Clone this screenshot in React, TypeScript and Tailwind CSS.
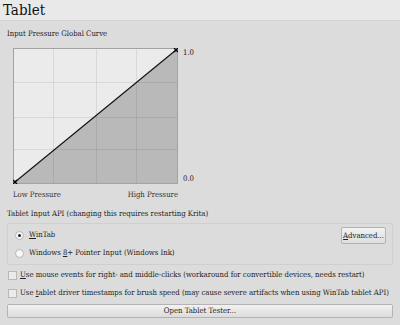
import React from "react";

const font = { fontFamily: '"DejaVu Serif Condensed", "DejaVu Serif", serif' };

function Curve() {
  return (
    <svg width="165" height="136" viewBox="0 0 165 136" className="block">
      <rect x="0.5" y="0.5" width="164" height="135" fill="#ebebeb" stroke="#a3a3a3" />
      <polygon points="1,135 164,1 164,135" fill="#b9b9b9" />
      {[40, 83, 123].map((x) => (
        <line key={"v" + x} x1={x + 0.5} y1="1" x2={x + 0.5} y2="135" stroke="#000" strokeOpacity="0.08" />
      ))}
      {[34, 69, 101].map((y) => (
        <line key={"h" + y} x1="1" y1={y + 0.5} x2="164" y2={y + 0.5} stroke="#000" strokeOpacity="0.08" />
      ))}
      <line x1="2" y1="134" x2="163" y2="2" stroke="#111" strokeWidth="1.1" />
      <path d="M0,132 L4,136 M0,136 L4,132" stroke="#000" strokeWidth="1.3" />
      <path d="M161,0 L165,4 M161,4 L165,0" stroke="#000" strokeWidth="1.3" />
    </svg>
  );
}

function Radio({ checked }: { checked?: boolean }) {
  return (
    <span className="inline-flex shrink-0 w-[9px] h-[9px] rounded-full border border-[#b5b5b5] bg-[#f7f7f7] items-center justify-center">
      {checked && <span className="w-[3px] h-[3px] rounded-full bg-[#222]" />}
    </span>
  );
}

function Check() {
  return <span className="inline-block shrink-0 w-[9px] h-[9px] border border-[#b8b8b8] bg-[#ebebeb]" />;
}

export default function App() {
  return (
    <div className="w-[400px] h-[325px] bg-[#dcdcdc] text-[#222] overflow-hidden text-[7.7px]" style={font}>
      <div className="h-[21px] bg-[#e9e9e9] border-b border-[#d4d4d4] pl-[3px] text-[15px] leading-[20px] text-[#111]">
        Tablet
      </div>
      <div className="pl-[7px] pt-[8px] leading-[10px]">Input Pressure Global Curve</div>
      <div className="pl-[13px] pt-[9px]">
        <div className="flex">
          <Curve />
          <div className="flex flex-col justify-between pl-[5px] h-[136px] leading-[10px]">
            <span>1.0</span>
            <span>0.0</span>
          </div>
        </div>
        <div className="flex justify-between w-[165px] pt-[6px] leading-[10px] text-[#333]">
          <span>Low Pressure</span>
          <span>High Pressure</span>
        </div>
      </div>
      <div className="pl-[7px] pt-[9px] leading-[10px]">
        Tablet Input API (changing this requires restarting Krita)
      </div>
      <div className="mx-[7px] mt-[4px] h-[42px] border border-[#cfcfcf] rounded-[2px] flex items-start justify-between pl-[7px] pr-[6px] pt-[3px]">
        <div className="flex flex-col gap-[8px] pt-[3px] leading-[10px]">
          <div className="flex items-center gap-[5px]">
            <Radio checked />
            <span>
              <u>W</u>inTab
            </span>
          </div>
          <div className="flex items-center gap-[5px]">
            <Radio />
            <span>
              Windows <u>8</u>+ Pointer Input (Windows Ink)
            </span>
          </div>
        </div>
        <div className="w-[45px] h-[17px] border border-[#b3b3b3] rounded-[2px] bg-gradient-to-b from-[#f2f2f2] to-[#dedede] leading-[15px] text-center whitespace-nowrap">
          <u>A</u>dvanced...
        </div>
      </div>
      <div className="flex flex-col gap-[8px] pl-[8px] pt-[5px] leading-[10px]">
        <div className="flex items-center gap-[3px] whitespace-nowrap">
          <Check />
          <span>
            <u>U</u>se mouse events for right- and middle-clicks (workaround for convertible devices, needs restart)
          </span>
        </div>
        <div className="flex items-center gap-[3px] whitespace-nowrap">
          <Check />
          <span>
            Use <u>t</u>ablet driver timestamps for brush speed (may cause severe artifacts when using WinTab tablet API)
          </span>
        </div>
      </div>
      <div className="mx-[7px] mt-[6px] h-[14px] border border-[#b3b3b3] rounded-[2px] bg-gradient-to-b from-[#f2f2f2] to-[#dcdcdc] leading-[12px] text-center">
        Open Tablet Tester...
      </div>
    </div>
  );
}
